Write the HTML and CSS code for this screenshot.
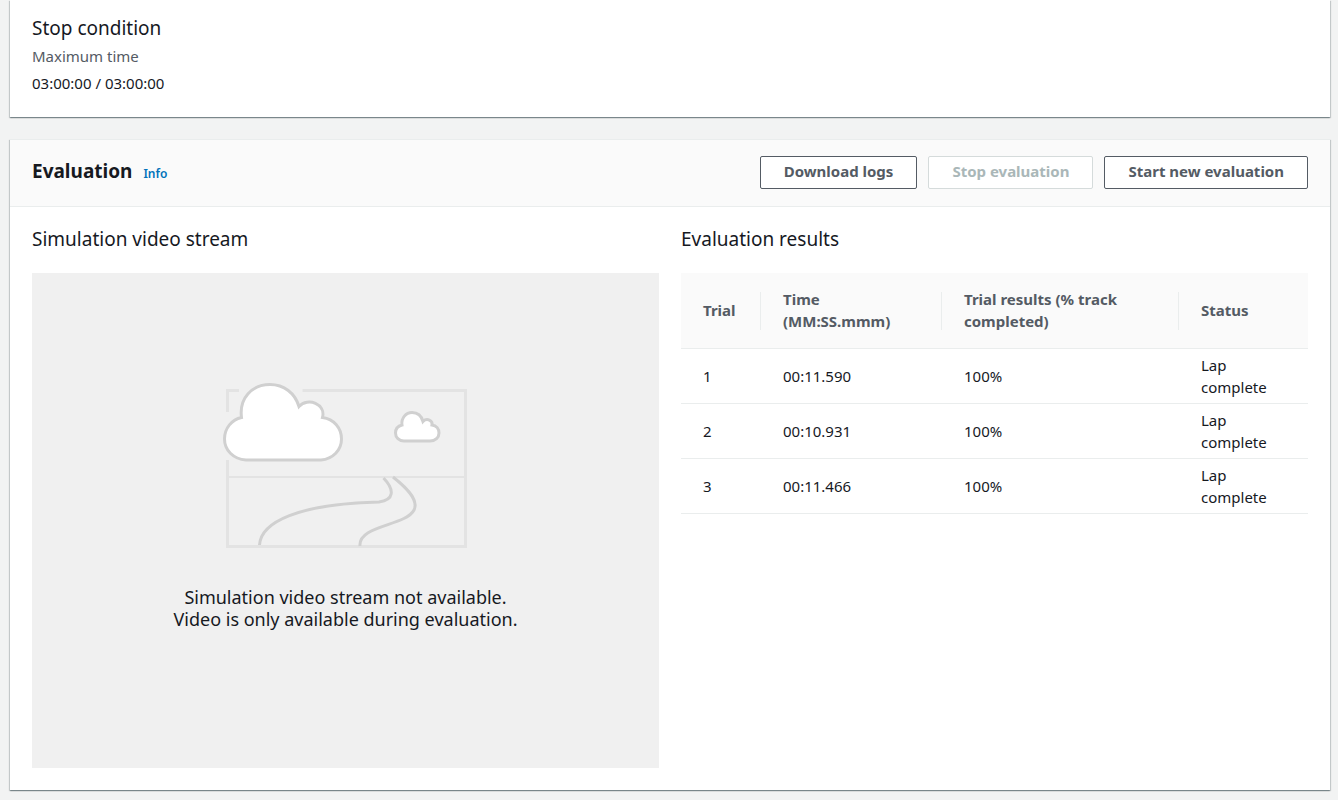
FILE: index.html
```html
<!DOCTYPE html>
<html lang="en">
<head>
<meta charset="utf-8">
<title>Evaluation</title>
<link rel="stylesheet" href="styles.css">
</head>
<body>
<main class="page">
  <section class="panel stop">
    <h3 class="subtitle">Stop condition</h3>
    <dl class="field">
      <dt class="field-label">Maximum time</dt>
      <dd class="field-value">03:00:00 / 03:00:00</dd>
    </dl>
  </section>

  <section class="panel">
    <header class="panel-header">
      <div class="heading">
        <h2 class="title">Evaluation</h2>
        <a class="info" href="#info">Info</a>
      </div>
      <div class="actions">
        <button class="button" type="button">Download logs</button>
        <button class="button" type="button" disabled>Stop evaluation</button>
        <button class="button" type="button">Start new evaluation</button>
      </div>
    </header>
    <div class="columns">
      <div class="column">
        <h3 class="subtitle">Simulation video stream</h3>
        <div class="video">
          <svg class="scene" width="248" height="168" viewBox="0 0 248 168" fill="none" aria-hidden="true">
            <g stroke="#e3e3e3" stroke-width="3">
              <path d="M5.500 31V9.500H17M80.500 9.500H243.500V165.500H5.500V79"/>
              <path d="M5 96H245" stroke-width="2"/>
            </g>
            <g stroke="#d0d0d0" stroke-width="3">
              <path fill="#fff" d="M24 79C11 78 2.500 69 2.500 58C2.500 47 10 38.500 19.500 36.500C17 17 30 3.500 48 3.500C62 3.500 73 12 77 25.500C86 16 104 23 100.500 36.500C112 38 119.500 47 119.500 58C119.500 69 111 78 99 79Z"/>
              <path fill="#fff" d="M182 60C177 60 173.500 56.500 173.500 52C173.500 48 176 45 180 44C179 37 184 31.500 190 31.500C195.500 31.500 199.500 35 201 40.500C205 36.500 211 39.500 210 44C214.500 44.500 217 48 217 52C217 56.500 213.500 60 208 60Z"/>
              <path d="M37.500 164C39 141 76 123 157 121C172 119 173 109 161.500 97"/>
              <path d="M171 96C190 111 196 121 192 129C184 145 136 144 138 165"/>
            </g>
          </svg>
          <p class="video-message">Simulation video stream not available.<br>Video is only available during evaluation.</p>
        </div>
      </div>
      <div class="column">
        <h3 class="subtitle">Evaluation results</h3>
        <table class="results">
          <colgroup><col class="col-trial"><col class="col-time"><col class="col-result"><col></colgroup>
          <thead>
            <tr><th scope="col">Trial</th><th scope="col">Time (MM:SS.mmm)</th><th scope="col">Trial results (% track completed)</th><th scope="col">Status</th></tr>
          </thead>
          <tbody>
            <tr><td>1</td><td>00:11.590</td><td>100%</td><td>Lap complete</td></tr>
            <tr><td>2</td><td>00:10.931</td><td>100%</td><td>Lap complete</td></tr>
            <tr><td>3</td><td>00:11.466</td><td>100%</td><td>Lap complete</td></tr>
          </tbody>
        </table>
      </div>
    </div>
  </section>
</main>
</body>
</html>
```
FILE: styles.css
```css
* {
  box-sizing: border-box;
}

body {
  margin: 0;
  background: #f2f3f3;
  color: #16191f;
  font: 15px/22px "Noto Sans", "Open Sans", sans-serif;
}

h2, h3, p, dl, dd {
  margin: 0;
}

.page {
  display: flex;
  flex-direction: column;
  gap: 22px;
  padding: 0 8px 9px 10px;
}

.panel {
  background: #fff;
  box-shadow: 0 1px 1px 0 rgba(0, 28, 36, 0.3), 1px 1px 1px 0 rgba(0, 28, 36, 0.15), -1px 1px 1px 0 rgba(0, 28, 36, 0.15);
}

.panel + .panel {
  border-top: 1px solid #eaeded;
}

.stop {
  padding: 16px 22px 23px;
}

.subtitle {
  font-size: 19px;
  line-height: 24px;
  font-weight: 400;
}

.field {
  display: grid;
  gap: 5px;
  padding-top: 5px;
}

.field-label {
  color: #545b64;
}

.panel-header {
  display: flex;
  justify-content: space-between;
  align-items: center;
  padding: 16px 22px 17px;
  background: #fafafa;
  border-bottom: 1px solid #eaeded;
}

.heading {
  display: flex;
  align-items: baseline;
  gap: 11px;
  padding-bottom: 2px;
}

.title {
  font-size: 19px;
  line-height: 24px;
  font-weight: 700;
}

.info {
  color: #0073bb;
  font-size: 12px;
  font-weight: 600;
  text-decoration: none;
}

.actions {
  display: flex;
  gap: 11px;
}

.button {
  padding: 3px 23px 6px;
  border: 1px solid #545b64;
  border-radius: 2px;
  background: #fff;
  color: #545b64;
  font: inherit;
  font-weight: 700;
}

.button:disabled {
  border-color: #d5dbdb;
  color: #aab7b8;
}

.columns {
  display: grid;
  grid-template-columns: 1fr 1fr;
  gap: 22px;
  padding: 20px 22px 22px;
}

.column {
  display: flex;
  flex-direction: column;
  gap: 22px;
}

.video {
  display: flex;
  flex-direction: column;
  align-items: center;
  gap: 37px;
  padding: 108px 22px 138px;
  background: #f0f0f0;
}

.video-message {
  font-size: 18px;
  text-align: center;
}

.results {
  width: 100%;
  border-collapse: collapse;
  table-layout: fixed;
}

.col-trial {
  width: 80px;
}

.col-time {
  width: 181px;
}

.col-result {
  width: 237px;
}

.results th {
  position: relative;
  padding: 15px 22px 16px;
  background: #fafafa;
  color: #545b64;
  text-align: left;
}

.results th:not(:last-child)::after {
  content: "";
  position: absolute;
  top: 19px;
  bottom: 18px;
  right: 0;
  border-right: 1px solid #eaeded;
}

.results td {
  padding: 5px 22px;
}

.results tr {
  border-bottom: 1px solid #eaeded;
}
```
